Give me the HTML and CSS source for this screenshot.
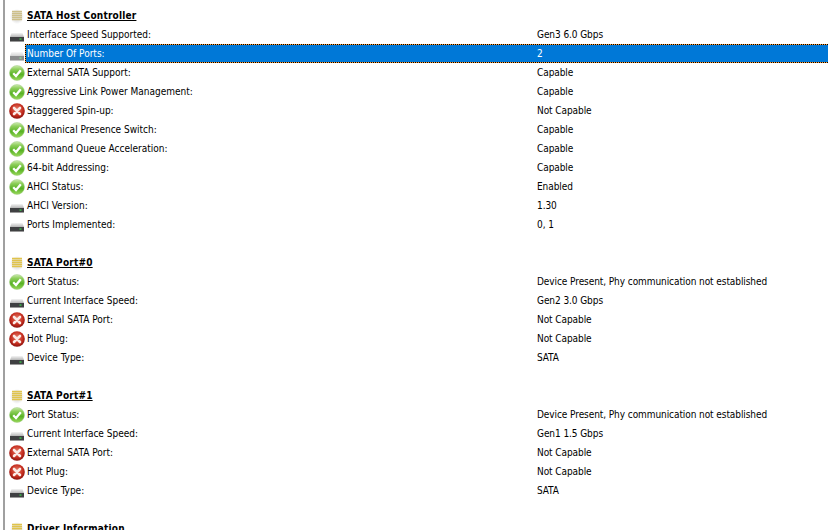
FILE: index.html
```html
<!DOCTYPE html>
<html lang="en">
<head>
<meta charset="utf-8">
<title>SATA Host Controller</title>
<link rel="stylesheet" href="styles.css">
</head>
<body>
<svg class="defs" width="0" height="0" aria-hidden="true">
  <defs>
    <linearGradient id="gOk" x1="0" y1="0" x2="0" y2="1"><stop offset="0" stop-color="#cdeab0"/><stop offset="0.25" stop-color="#8fcf5c"/><stop offset="0.6" stop-color="#58b224"/><stop offset="1" stop-color="#9ad85c"/></linearGradient>
    <radialGradient id="gNo" cx="0.5" cy="0.4" r="0.6"><stop offset="0" stop-color="#e8806a"/><stop offset="0.65" stop-color="#c42c1e"/><stop offset="1" stop-color="#8a120e"/></radialGradient>
    <linearGradient id="gDrive" x1="0" y1="0" x2="0" y2="1"><stop offset="0" stop-color="#f4f4f4"/><stop offset="1" stop-color="#b4b4b4"/></linearGradient>
    <radialGradient id="gGlow" cx="0.5" cy="0.5" r="0.5"><stop offset="0.6" stop-color="#e6e6e6"/><stop offset="1" stop-color="#ffffff"/></radialGradient>
    <symbol id="ok" viewBox="0 0 16 16"><circle cx="8" cy="8" r="7.5" fill="url(#gOk)" stroke="#a5cf88" stroke-width="0.5"/><path d="M4.2 8.2 7 11 11.8 5.2" fill="none" stroke="#fff" stroke-width="2.3"/></symbol>
    <symbol id="no" viewBox="0 0 16 16"><circle cx="8" cy="8" r="7.8" fill="url(#gNo)"/><path d="M5 5 11 11M11 5 5 11" fill="none" stroke="#fbeae6" stroke-width="2.6" stroke-linecap="round"/></symbol>
    <symbol id="drive" viewBox="0 0 16 16"><path d="M2.5 6h11L15 10H1z" fill="url(#gDrive)"/><rect x="1" y="10" width="14" height="4" fill="#3f4042"/><rect x="1" y="14" width="14" height="1" fill="#9a9a9a"/><rect x="10.5" y="11.4" width="2" height="1.3" fill="#39d14a"/></symbol>
    <symbol id="stack" viewBox="0 0 16 16"><rect x="1" y="1" width="14" height="15" fill="url(#gGlow)"/><path d="M3 3.5h10M3 5.5h10M3 7.5h10M3 9.5h10M3 11.5h10" stroke="#cdbf8a" stroke-width="1.3"/></symbol>
    <symbol id="stack-y" viewBox="0 0 16 16"><rect x="1" y="1" width="14" height="15" fill="url(#gGlow)"/><path d="M3 3.5h10M3 5.5h10M3 7.5h10M3 9.5h10M3 11.5h10" stroke="#e0c34c" stroke-width="1.3"/></symbol>
  </defs>
</svg>
<main class="list">
  <div class="row head"><svg class="icon"><use href="#stack"/></svg><span class="name">SATA Host Controller</span></div>
  <div class="row"><svg class="icon"><use href="#drive"/></svg><span class="name">Interface Speed Supported:</span><span class="val">Gen3 6.0 Gbps</span></div>
  <div class="row selected"><svg class="icon faded"><use href="#drive"/></svg><div class="bar"><span class="name">Number Of Ports:</span><span class="val">2</span></div></div>
  <div class="row"><svg class="icon"><use href="#ok"/></svg><span class="name">External SATA Support:</span><span class="val">Capable</span></div>
  <div class="row"><svg class="icon"><use href="#ok"/></svg><span class="name">Aggressive Link Power Management:</span><span class="val">Capable</span></div>
  <div class="row"><svg class="icon"><use href="#no"/></svg><span class="name">Staggered Spin-up:</span><span class="val">Not Capable</span></div>
  <div class="row"><svg class="icon"><use href="#ok"/></svg><span class="name">Mechanical Presence Switch:</span><span class="val">Capable</span></div>
  <div class="row"><svg class="icon"><use href="#ok"/></svg><span class="name">Command Queue Acceleration:</span><span class="val">Capable</span></div>
  <div class="row"><svg class="icon"><use href="#ok"/></svg><span class="name">64-bit Addressing:</span><span class="val">Capable</span></div>
  <div class="row"><svg class="icon"><use href="#ok"/></svg><span class="name">AHCI Status:</span><span class="val">Enabled</span></div>
  <div class="row"><svg class="icon"><use href="#drive"/></svg><span class="name">AHCI Version:</span><span class="val">1.30</span></div>
  <div class="row"><svg class="icon"><use href="#drive"/></svg><span class="name">Ports Implemented:</span><span class="val">0, 1</span></div>
  <div class="row"></div>
  <div class="row head"><svg class="icon"><use href="#stack-y"/></svg><span class="name">SATA Port#0</span></div>
  <div class="row"><svg class="icon"><use href="#ok"/></svg><span class="name">Port Status:</span><span class="val">Device Present, Phy communication not established</span></div>
  <div class="row"><svg class="icon"><use href="#drive"/></svg><span class="name">Current Interface Speed:</span><span class="val">Gen2 3.0 Gbps</span></div>
  <div class="row"><svg class="icon"><use href="#no"/></svg><span class="name">External SATA Port:</span><span class="val">Not Capable</span></div>
  <div class="row"><svg class="icon"><use href="#no"/></svg><span class="name">Hot Plug:</span><span class="val">Not Capable</span></div>
  <div class="row"><svg class="icon"><use href="#drive"/></svg><span class="name">Device Type:</span><span class="val">SATA</span></div>
  <div class="row"></div>
  <div class="row head"><svg class="icon"><use href="#stack-y"/></svg><span class="name">SATA Port#1</span></div>
  <div class="row"><svg class="icon"><use href="#ok"/></svg><span class="name">Port Status:</span><span class="val">Device Present, Phy communication not established</span></div>
  <div class="row"><svg class="icon"><use href="#drive"/></svg><span class="name">Current Interface Speed:</span><span class="val">Gen1 1.5 Gbps</span></div>
  <div class="row"><svg class="icon"><use href="#no"/></svg><span class="name">External SATA Port:</span><span class="val">Not Capable</span></div>
  <div class="row"><svg class="icon"><use href="#no"/></svg><span class="name">Hot Plug:</span><span class="val">Not Capable</span></div>
  <div class="row"><svg class="icon"><use href="#drive"/></svg><span class="name">Device Type:</span><span class="val">SATA</span></div>
  <div class="row"></div>
  <div class="row head"><svg class="icon"><use href="#stack-y"/></svg><span class="name">Driver Information</span></div>
</main>
</body>
</html>
```
FILE: styles.css
```css
html, body {
  margin: 0;
  height: 100%;
  overflow: hidden;
  background: #fff;
}
.defs { display: block; height: 0; }
.list {
  margin-left: 3px;
  border-left: 2px solid #a0a0a0;
  padding: 6px 0 0 4px;
  height: 524px;
  font: 10px/19px "DejaVu Sans Condensed", "DejaVu Sans", Tahoma, sans-serif;
  font-stretch: condensed;
  color: #000;
}
.row {
  display: flex;
  align-items: center;
  height: 19px;
}
.icon {
  flex: none;
  width: 16px;
  height: 16px;
}
.faded { opacity: 0.6; }
.name {
  flex: none;
  width: 510px;
  padding-left: 2px;
}
.val {
  flex: 1;
  white-space: nowrap;
  letter-spacing: -0.08px;
}
.head .name {
  font-weight: 700;
  letter-spacing: 0.2px;
  text-decoration: underline;
}
.bar {
  display: flex;
  flex: 1;
  height: 19px;
  color: #fff;
  background:
    repeating-linear-gradient(90deg, #000 0 1px, #ff9a2e 1px 2px) top / 100% 1px no-repeat,
    repeating-linear-gradient(90deg, #000 0 1px, #ff9a2e 1px 2px) bottom / 100% 1px no-repeat,
    repeating-linear-gradient(0deg, #000 0 1px, #ff9a2e 1px 2px) left / 1px 100% no-repeat,
    #0078d7;
}
```
